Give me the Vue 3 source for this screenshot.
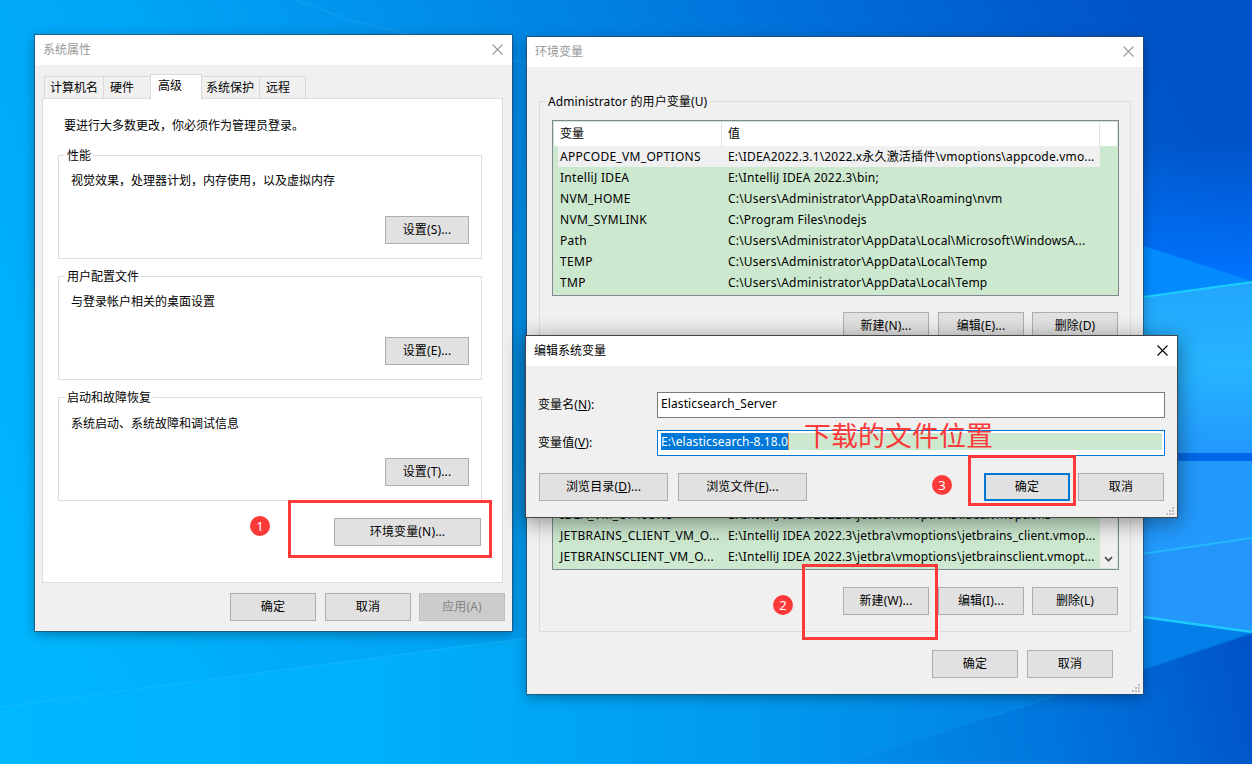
<template>
  <main class="desktop">
    <svg class="wallpaper" viewBox="0 0 1252 764" preserveAspectRatio="none">
      <defs>
        <linearGradient id="sky" gradientUnits="userSpaceOnUse" x1="0" y1="560" x2="1130" y2="0">
          <stop offset="0" stop-color="#00b6ff" />
          <stop offset="0.3" stop-color="#00a4f5" />
          <stop offset="0.6" stop-color="#0083e4" />
          <stop offset="0.82" stop-color="#0068d6" />
          <stop offset="1" stop-color="#0054c9" />
        </linearGradient>
        <linearGradient id="floor" x1="0" y1="0" x2="1" y2="0">
          <stop offset="0" stop-color="#00b8ff" />
          <stop offset="0.3" stop-color="#00b0fa" />
          <stop offset="0.6" stop-color="#009aee" />
          <stop offset="0.85" stop-color="#0080e4" />
          <stop offset="1" stop-color="#0070da" />
        </linearGradient>
        <linearGradient id="glow" x1="0" y1="0" x2="0" y2="1">
          <stop offset="0" stop-color="#0070f8" stop-opacity="0" />
          <stop offset="1" stop-color="#0074ff" />
        </linearGradient>
        <linearGradient id="pane" x1="0" y1="0" x2="0" y2="1">
          <stop offset="0" stop-color="#22a6fc" />
          <stop offset="0.5" stop-color="#26b4ff" />
          <stop offset="1" stop-color="#2298fc" />
        </linearGradient>
        <linearGradient id="corner" gradientUnits="userSpaceOnUse" x1="860" y1="764" x2="1252" y2="680">
          <stop offset="0" stop-color="#008ee8" />
          <stop offset="0.55" stop-color="#0072dc" />
          <stop offset="1" stop-color="#0054c8" />
        </linearGradient>
      </defs>
      <rect width="1252" height="764" fill="url(#sky)" />
      <path d="M0 707 L526 638 L1252 500 V764 H0Z" fill="url(#floor)" />
      <path d="M295 0 L350 20 L526 63" fill="none" stroke="#1aa2f6" stroke-width="2" opacity="0.45" />
      <path d="M0 707 L526 638" fill="none" stroke="#2cc0ff" opacity="0.4" />
      <rect x="1100" y="140" width="152" height="140" fill="url(#glow)" />
      <path d="M1100 232 L1252 281 L1100 304Z" fill="#048cff" />
      <path d="M1100 303 L1252 282 V453 H1100Z" fill="url(#pane)" />
      <path d="M1100 303 L1252 282" stroke="#1cd0ff" stroke-width="2" />
      <rect x="1100" y="453" width="152" height="8" fill="#0068e8" />
      <path d="M1100 461 H1252 V538 L1100 560Z" fill="#2299fc" />
      <path d="M1100 560 L1252 538 V632 L1100 611Z" fill="#2496fa" />
      <path d="M1100 560 L1252 538" stroke="#26b8ff" stroke-width="2" />
      <path d="M1100 611 L1252 632 L1100 684Z" fill="#047fea" />
      <path d="M838 764 L1054 697 L1143 670 L1252 634 V764Z" fill="url(#corner)" />
      <path d="M838 764 L1054 697" fill="none" stroke="#1a90f0" opacity="0.5" />
      <path d="M1100 611 L1252 632" stroke="#1ccaff" stroke-width="2.5" />
    </svg>

    <section class="window properties">
      <header class="titlebar">
        <span>系统属性</span>
        <svg class="close" viewBox="0 0 11 11"><path d="M0.5 0.5 L10.5 10.5 M10.5 0.5 L0.5 10.5" /></svg>
      </header>
      <nav class="tabs">
        <span v-for="tab in tabs" :key="tab.name" class="tab" :class="tab.cls">{{ tab.name }}</span>
      </nav>
      <div class="panel">
        <p class="hint">要进行大多数更改，你必须作为管理员登录。</p>
        <div v-for="group in groups" :key="group.title" class="group setting">
          <span class="legend">{{ group.title }}</span>
          <p class="setting-text">{{ group.text }}</p>
          <button class="btn small">{{ group.button }}</button>
        </div>
        <button class="btn env-btn">环境变量(N)...</button>
      </div>
      <footer class="actions">
        <button class="btn">确定</button>
        <button class="btn">取消</button>
        <button class="btn disabled">应用(A)</button>
      </footer>
    </section>

    <section class="window variables">
      <header class="titlebar">
        <span>环境变量</span>
        <svg class="close" viewBox="0 0 11 11"><path d="M0.5 0.5 L10.5 10.5 M10.5 0.5 L0.5 10.5" /></svg>
      </header>
      <div class="group user-group">
        <span class="legend">Administrator 的用户变量(U)</span>
        <div class="list user-list">
          <div class="list-head">
            <span class="col-name">变量</span>
            <span class="col-value">值</span>
          </div>
          <div v-for="(row, i) in userVars" :key="row.name" class="row" :class="{ selected: i === 0 }">
            <span class="cell-name">{{ row.name }}</span>
            <span class="cell-value">{{ row.value }}</span>
          </div>
        </div>
        <div class="group-actions">
          <button class="btn">新建(N)...</button>
          <button class="btn">编辑(E)...</button>
          <button class="btn">删除(D)</button>
        </div>
      </div>
      <div class="group system-group">
        <div class="list system-list">
          <div class="system-rows">
            <div v-for="row in systemVars" :key="row.name" class="row">
              <span class="cell-name">{{ row.name }}</span>
              <span class="cell-value">{{ row.value }}</span>
            </div>
          </div>
          <div class="scrollbar">
            <svg viewBox="0 0 9 7"><path d="M1 1.2 L4.5 4.7 L8 1.2" /></svg>
          </div>
        </div>
        <div class="group-actions">
          <button class="btn">新建(W)...</button>
          <button class="btn">编辑(I)...</button>
          <button class="btn">删除(L)</button>
        </div>
      </div>
      <footer class="actions">
        <button class="btn">确定</button>
        <button class="btn">取消</button>
      </footer>
      <svg class="grip" viewBox="0 0 8 8"><path :d="gripPath" /></svg>
    </section>

    <section class="window edit">
      <header class="titlebar">
        <span>编辑系统变量</span>
        <svg class="close" viewBox="0 0 11 11"><path d="M0.5 0.5 L10.5 10.5 M10.5 0.5 L0.5 10.5" /></svg>
      </header>
      <div class="field">
        <label>变量名(<u>N</u>):</label>
        <div class="input"><span class="input-text">Elasticsearch_Server</span></div>
      </div>
      <div class="field">
        <label>变量值(<u>V</u>):</label>
        <div class="input focused">
          <div class="input-fill"><span class="selection">E:\elasticsearch-8.18.0</span></div>
        </div>
      </div>
      <footer class="edit-actions">
        <button class="btn wide">浏览目录(<u>D</u>)...</button>
        <button class="btn wide">浏览文件(<u>F</u>)...</button>
        <button class="btn primary">确定</button>
        <button class="btn">取消</button>
      </footer>
      <svg class="grip" viewBox="0 0 8 8"><path :d="gripPath" /></svg>
    </section>

    <div class="mark mark-1"></div>
    <div class="mark mark-2"></div>
    <div class="mark mark-3"></div>
    <span class="step step-1">1</span>
    <span class="step step-2">2</span>
    <span class="step step-3">3</span>
    <span class="note">下载的文件位置</span>
  </main>
</template>

<script setup>
const tabs = [
  { name: '计算机名', cls: 'tab-computer' },
  { name: '硬件', cls: 'tab-hardware' },
  { name: '高级', cls: 'active' },
  { name: '系统保护', cls: 'tab-protect' },
  { name: '远程', cls: 'tab-remote' },
]

const groups = [
  { title: '性能', text: '视觉效果，处理器计划，内存使用，以及虚拟内存', button: '设置(S)...' },
  { title: '用户配置文件', text: '与登录帐户相关的桌面设置', button: '设置(E)...' },
  { title: '启动和故障恢复', text: '系统启动、系统故障和调试信息', button: '设置(T)...' },
]

const userVars = [
  { name: 'APPCODE_VM_OPTIONS', value: 'E:\\IDEA2022.3.1\\2022.x永久激活插件\\vmoptions\\appcode.vmo...' },
  { name: 'IntelliJ IDEA', value: 'E:\\IntelliJ IDEA 2022.3\\bin;' },
  { name: 'NVM_HOME', value: 'C:\\Users\\Administrator\\AppData\\Roaming\\nvm' },
  { name: 'NVM_SYMLINK', value: 'C:\\Program Files\\nodejs' },
  { name: 'Path', value: 'C:\\Users\\Administrator\\AppData\\Local\\Microsoft\\WindowsA...' },
  { name: 'TEMP', value: 'C:\\Users\\Administrator\\AppData\\Local\\Temp' },
  { name: 'TMP', value: 'C:\\Users\\Administrator\\AppData\\Local\\Temp' },
]

const systemVars = [
  { name: 'IDEA_VM_OPTIONS', value: 'E:\\IntelliJ IDEA 2022.3\\jetbra\\vmoptions\\idea.vmoptions' },
  { name: 'JETBRAINS_CLIENT_VM_O...', value: 'E:\\IntelliJ IDEA 2022.3\\jetbra\\vmoptions\\jetbrains_client.vmop...' },
  { name: 'JETBRAINSCLIENT_VM_O...', value: 'E:\\IntelliJ IDEA 2022.3\\jetbra\\vmoptions\\jetbrainsclient.vmopt...' },
]

const gripPath = 'M6 0h2v2h-2z M3 3h2v2h-2z M6 3h2v2h-2z M0 6h2v2h-2z M3 6h2v2h-2z M6 6h2v2h-2z'
</script>

<style>
body {
  margin: 0;
  overflow: hidden;
}
</style>

<style scoped>
* {
  box-sizing: border-box;
}

.desktop {
  position: relative;
  width: 1252px;
  height: 764px;
  overflow: hidden;
  background: #00a0f0;
  font-family: "Noto Sans", "Noto Sans CJK SC", sans-serif;
  font-size: 12px;
  line-height: 16px;
  color: #000;
  white-space: nowrap;
}

.wallpaper {
  position: absolute;
  inset: 0;
  width: 100%;
  height: 100%;
}

p {
  margin: 0;
}

/* windows */
.window {
  position: absolute;
  display: flex;
  flex-direction: column;
  background: #f0f0f0;
  box-shadow: 0 0 0 1px rgba(40, 70, 100, 0.65), 0 3px 12px rgba(0, 0, 0, 0.35);
}

.properties {
  left: 35px;
  top: 35px;
  width: 477px;
  height: 596px;
}

.variables {
  left: 527px;
  top: 37px;
  width: 616px;
  height: 657px;
}

.edit {
  left: 526px;
  top: 336px;
  width: 651px;
  height: 181px;
  box-shadow: 0 0 0 1px #444, 0 4px 20px 2px rgba(0, 0, 0, 0.4);
}

.titlebar {
  flex: none;
  display: flex;
  align-items: center;
  justify-content: space-between;
  height: 30px;
  padding: 0 9px 0 8px;
  background: #fff;
  color: #999;
}

.edit .titlebar {
  color: #000;
}

.close {
  width: 11px;
  height: 11px;
  margin-top: -2px;
  fill: none;
  stroke: currentColor;
  stroke-width: 1.1;
}

/* buttons */
.btn {
  flex: none;
  width: 86px;
  height: 28px;
  padding: 0;
  border: 1px solid #adadad;
  border-radius: 0;
  background: #e1e1e1;
  font: inherit;
  letter-spacing: 0.15px;
  color: #000;
  text-align: center;
}

.btn.small {
  width: 84px;
}

.btn.wide {
  width: 129px;
}

.btn.disabled {
  background: #ccc;
  border-color: #bfbfbf;
  color: #838383;
}

.btn.primary {
  border: 2px solid #0078d7;
}

/* system properties */
.tabs {
  display: flex;
  align-items: flex-end;
  height: 34px;
  padding-left: 9px;
  margin-bottom: -1px;
}

.tab {
  position: relative;
  height: 23px;
  padding: 3px 0 0 5px;
  border: 1px solid #d9d9d9;
  border-left: none;
  border-bottom: none;
}

.tab-computer {
  width: 60px;
  border-left: 1px solid #d9d9d9;
}

.tab-hardware {
  width: 46px;
  padding-left: 6px;
  border-right: none;
}

.tab.active {
  width: 52px;
  height: 25px;
  padding-left: 7px;
  border-left: 1px solid #d9d9d9;
  background: #fff;
  z-index: 1;
}

.tab-protect {
  width: 58px;
  padding-left: 4px;
}

.tab-remote {
  width: 46px;
  padding-left: 6px;
}

.panel {
  display: flex;
  flex-direction: column;
  height: 485px;
  margin: 0 9px 0 7px;
  padding: 19px 20px 0 15px;
  border: 1px solid #dcdcdc;
  background: #fff;
}

.hint {
  margin: 0 0 21px 6px;
}

.group {
  display: flex;
  flex-direction: column;
  border: 1px solid #dcdcdc;
}

.legend {
  align-self: flex-start;
  height: 16px;
  margin: -8px 0 0 6px;
  padding: 0 2px;
  background: #fff;
}

.setting {
  height: 104px;
  margin-bottom: 17px;
}

.setting-text {
  margin: 9px 0 0 12px;
}

.setting:nth-of-type(3) .setting-text {
  margin-top: 10px;
}

.setting .btn {
  align-self: flex-end;
  margin: auto 12px 14px 0;
}

.env-btn {
  align-self: flex-end;
  width: 147px;
  margin-right: 1px;
}

.actions {
  display: flex;
  justify-content: flex-end;
  gap: 9px;
  padding: 10px 7px 0 0;
}

.properties .disabled {
  margin-left: -1px;
}

/* environment variables */
.variables .group {
  margin: 0 12px;
}

.variables .legend {
  background: #f0f0f0;
  letter-spacing: 0.1px;
}

.variables .user-group {
  height: 249px;
  margin-top: 34px;
}

.variables .system-group {
  height: 268px;
  margin-top: 14px;
  padding-top: 18px;
}

.list {
  flex: none;
  width: 567px;
  margin-left: 12px;
  padding: 1px;
  border: 1px solid #828790;
  background: #cce8cf;
}

.user-list {
  height: 176px;
  margin-top: 10px;
}

.list-head {
  display: flex;
  height: 24px;
  line-height: 23px;
  background: #fff;
}

.col-name {
  width: 168px;
  padding-left: 6px;
  border-right: 1px solid #e5e5e5;
}

.col-value {
  width: 378px;
  padding-left: 6px;
  border-right: 1px solid #e5e5e5;
}

.row {
  flex: none;
  display: flex;
  width: 542px;
  height: 21px;
  margin-left: 4px;
  padding-left: 2px;
  line-height: 21px;
  letter-spacing: 0.17px;
}

.row.selected {
  background: #f0f0f0;
}

.cell-name {
  width: 168px;
  letter-spacing: 0.3px;
}

.system-list {
  display: flex;
  justify-content: space-between;
  height: 187px;
}

.system-rows {
  display: flex;
  flex-direction: column;
  justify-content: flex-end;
  padding-bottom: 1px;
  overflow: hidden;
}

.scrollbar {
  display: flex;
  align-items: flex-end;
  justify-content: center;
  width: 17px;
  padding-bottom: 5px;
  background: #f0f0f0;
}

.scrollbar svg {
  width: 9px;
  height: 7px;
  fill: none;
  stroke: #505050;
  stroke-width: 1.8;
}

.group-actions {
  display: flex;
  justify-content: flex-end;
  gap: 9px;
  margin: 16px 12px 0 0;
}

.system-group .group-actions {
  margin-top: 17px;
}

.group-actions .btn:last-child {
  margin-left: -1px;
}

.variables .actions {
  padding: 18px 30px 0 0;
}

.grip {
  position: absolute;
  right: 3px;
  bottom: 2px;
  width: 8px;
  height: 8px;
  fill: #bfbfbf;
}

/* edit dialog */
.field {
  display: flex;
  align-items: center;
  height: 26px;
  margin: 26px 12px 0;
  letter-spacing: 0.1px;
}

.field + .field {
  margin-top: 12px;
}

.field label {
  width: 119px;
}

.input {
  flex: 1;
  height: 26px;
  padding: 2px 2px 0 3px;
  border: 1px solid #7a7a7a;
  background: #fff;
  line-height: 18px;
}

.input.focused {
  border-color: #0078d7;
}

.input-fill {
  display: flex;
  height: 17px;
  background: #cce8cf;
}

.selection {
  border-right: 1px solid #e09048;
  background: #0078d7;
  color: #fff;
}

.edit-actions {
  display: flex;
  gap: 10px;
  padding: 17px 13px 0;
}

.edit-actions .primary {
  margin-left: auto;
}

.edit-actions .primary + .btn {
  margin-left: -2px;
}

/* annotations */
.mark {
  position: absolute;
  border: 3px solid #fc3a3a;
}

.mark-1 {
  left: 288px;
  top: 500px;
  width: 204px;
  height: 58px;
}

.mark-2 {
  left: 802px;
  top: 564px;
  width: 136px;
  height: 76px;
}

.mark-3 {
  left: 968px;
  top: 455px;
  width: 108px;
  height: 51px;
}

.step {
  position: absolute;
  width: 20px;
  height: 20px;
  border-radius: 50%;
  background: #fc3a3a;
  color: #fff;
  font-size: 13px;
  line-height: 20px;
  text-align: center;
}

.step-1 {
  left: 250px;
  top: 516px;
}

.step-2 {
  left: 773px;
  top: 595px;
}

.step-3 {
  left: 932px;
  top: 475px;
}

.note {
  position: absolute;
  left: 804px;
  top: 418px;
  font-size: 27px;
  line-height: 36px;
  color: #fc3a3a;
}
</style>
